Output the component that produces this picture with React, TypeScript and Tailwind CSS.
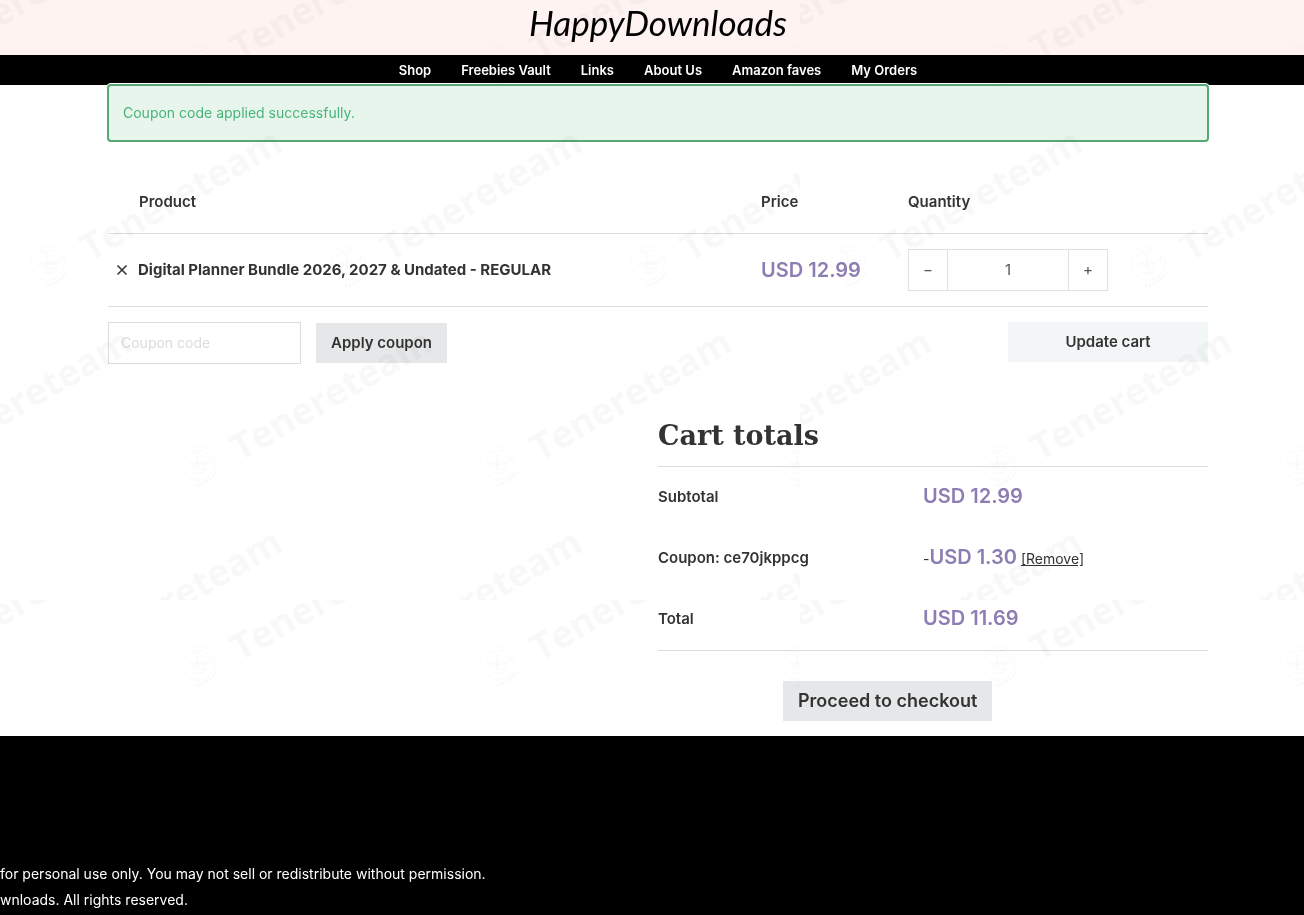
import { useState } from 'react'
import { X } from 'lucide-react'

const navLinks = ['Shop', 'Freebies Vault', 'Links', 'About Us', 'Amazon faves', 'My Orders']

// start points of the stamps inside one 800x600 tile
const stamps = [
  [-60, 62], [240, 62], [540, 62],
  [90, 262], [390, 262], [690, 262],
  [-60, 462], [240, 462], [540, 462],
  [90, 662], [390, 662], [690, 662],
  [840, 462], [840, 62],
]

export default function App() {
  return (
    <div className="relative flex min-h-screen flex-col overflow-hidden bg-white font-['Inter',sans-serif] text-[15px] leading-6 text-[#333333]">
      <Header />
      <main className="w-full pl-3">
        <div className="mx-auto max-w-[1100px]">
          <Notice />
          <CartForm />
          <CartTotals />
        </div>
      </main>
      <Footer />
      <Watermark />
    </div>
  )
}

function Header() {
  return (
    <header>
      <div className="flex h-[55px] items-center justify-center bg-[#fff3f2] pb-3 pl-3">
        <a href="#" className="font-['Lato',cursive] text-[35px] italic leading-10 text-black">
          HappyDownloads
        </a>
      </div>
      <nav className="flex h-[30px] items-center justify-center gap-[30px] bg-black pl-3 text-[13px] font-semibold text-white">
        {navLinks.map(label => (
          <a key={label} href="#">{label}</a>
        ))}
      </nav>
    </header>
  )
}

function Notice() {
  return (
    <div
      role="status"
      className="relative -mx-px -mt-px rounded border-2 border-[#56a874] bg-[#e7f5ed] px-3.5 py-[15px] text-[14px] leading-6 text-[#48b577] ring-1 ring-white"
    >
      Coupon code applied successfully.
    </div>
  )
}

function CartForm() {
  const [quantity, setQuantity] = useState(1)

  return (
    <form className="pt-[30px]" onSubmit={e => e.preventDefault()}>
      <table className="w-full table-fixed border-collapse text-left">
        <thead>
          <tr className="h-[61px] border-b border-[#dcdcdc]">
            <th className="pl-[31px] font-semibold">Product</th>
            <th className="w-[147px] font-semibold">Price</th>
            <th className="w-[300px] font-semibold">Quantity</th>
          </tr>
        </thead>
        <tbody>
          <tr className="h-[73px] border-b border-[#dcdcdc]">
            <td>
              <div className="flex items-center gap-2 pl-1.5">
                <button type="button" aria-label="Remove item">
                  <X size={16} strokeWidth={2.5} />
                </button>
                <a href="#" className="font-bold">Digital Planner Bundle 2026, 2027 &amp; Undated - REGULAR</a>
              </div>
            </td>
            <td className="text-[20px] font-semibold text-[#8c7db3]">USD 12.99</td>
            <td>
              <div className="flex h-[42px] w-[200px] border border-[#dfdfdf] text-[#555555]">
                <button type="button" aria-label="Decrease quantity" className="w-[38px]" onClick={() => setQuantity(q => Math.max(1, q - 1))}>
                  −
                </button>
                <input
                  aria-label="Quantity"
                  className="min-w-0 flex-1 border-x border-[#dfdfdf] text-center"
                  value={quantity}
                  onChange={e => setQuantity(Number(e.target.value) || 1)}
                />
                <button type="button" aria-label="Increase quantity" className="w-[38px]" onClick={() => setQuantity(q => q + 1)}>
                  +
                </button>
              </div>
            </td>
          </tr>
        </tbody>
      </table>

      <div className="flex items-start pt-[15px]">
        <input
          aria-label="Coupon code"
          placeholder="Coupon code"
          className="h-[42px] w-[193px] border border-[#dcdcdc] px-3 text-[14px] placeholder:text-[#dcdcdc]"
        />
        <button type="button" className="ml-[15px] mt-px h-10 bg-[#e5e7e8] px-[15px] font-semibold">
          Apply coupon
        </button>
        <button type="submit" className="ml-auto h-10 w-[200px] bg-[#f3f6f7] font-semibold">
          Update cart
        </button>
      </div>
    </form>
  )
}

function CartTotals() {
  return (
    <section className="ml-auto w-1/2 pt-[52px] pb-[15px]">
      <h2 className="font-['DejaVu_Serif',serif] text-[27px] font-bold leading-10">Cart totals</h2>
      <table className="mt-2.5 w-full table-fixed border-separate border-spacing-0 border-y border-[#dcdcdc] text-left">
        <tbody>
          <TotalRow label="Subtotal" amount="USD 12.99" />
          <TotalRow label="Coupon: ce70jkppcg" amount="USD 1.30" removable />
          <TotalRow label="Total" amount="USD 11.69" />
        </tbody>
      </table>
      <div className="flex pl-[125px] pt-[30px]">
        <a href="#" className="flex h-10 items-center bg-[#e5e7e8] px-[15px] text-[18px] font-semibold">
          Proceed to checkout
        </a>
      </div>
    </section>
  )
}

function TotalRow({ label, amount, removable }: { label: string; amount: string; removable?: boolean }) {
  return (
    <tr className="h-[61px]">
      <th className="w-[265px] font-semibold">{label}</th>
      <td className="text-[14px]">
        {removable && '-'}
        <span className="text-[20px] font-semibold text-[#8c7db3]">{amount}</span>
        {removable && <> <a href="#" className="underline">[Remove]</a></>}
      </td>
    </tr>
  )
}

function Footer() {
  return (
    <footer className="flex-1 bg-black pt-[125px] text-[14px] leading-[26px] text-white">
      <p>for personal use only. You may not sell or redistribute without permission.</p>
      <p>wnloads. All rights reserved.</p>
    </footer>
  )
}

function Watermark() {
  return (
    <svg aria-hidden="true" className="pointer-events-none absolute inset-0 h-full w-full mix-blend-multiply">
      <defs>
        <g id="stamp" fill="none" stroke="#888888">
          <circle cx="-42" cy="1" r="17" strokeDasharray="2 1" />
          <path d="M-54 -5q4 -8 10 -4q6 -6 10 0q6 2 5 8M-53 2h20M-50 -1q5 5 9 0q6 4 10 -1M-49 6q5 -4 8 0q4 3 8 -1M-47 10q6 4 12 -1M-43 -8v16" />
          <path d="M-45 24q12 -2 21 -13" strokeWidth="3" strokeDasharray="2 2" />
          <text transform="rotate(-30)" fill="#888888" stroke="none" className="font-['Open_Sans',sans-serif] text-[37px] font-bold">
            Tenereteam
          </text>
        </g>
        <pattern id="stamps" width="800" height="600" patternUnits="userSpaceOnUse">
          {stamps.map(([x, y]) => (
            <use key={`${x}-${y}`} href="#stamp" x={x} y={y} />
          ))}
        </pattern>
      </defs>
      <rect width="100%" height="100%" fill="url(#stamps)" opacity="0.06" />
    </svg>
  )
}
